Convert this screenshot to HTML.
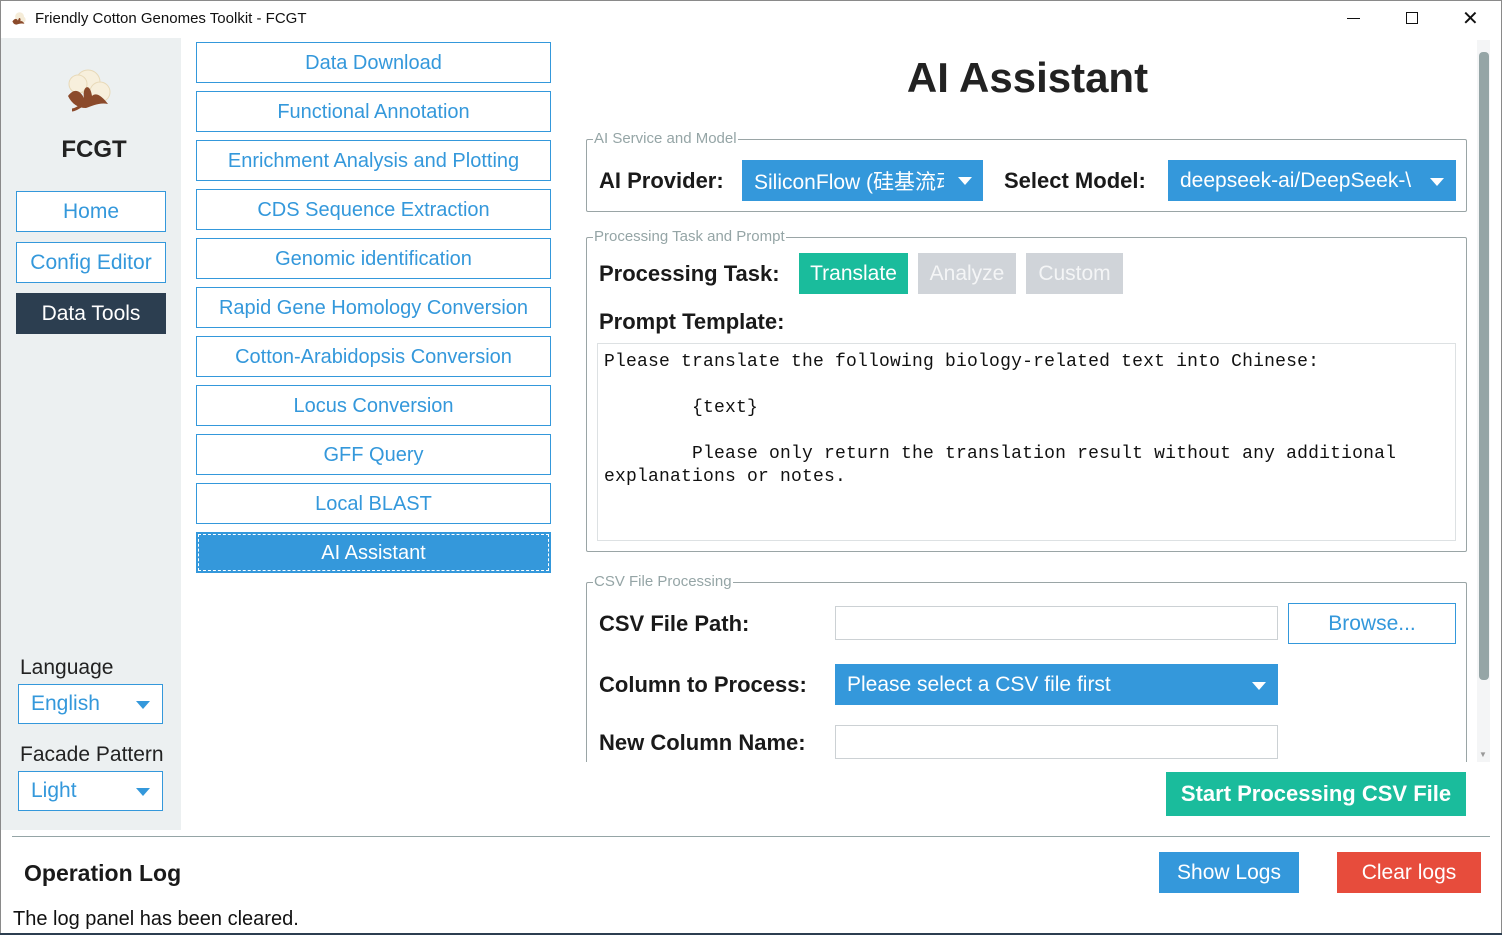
<!DOCTYPE html>
<html><head><meta charset="utf-8"><style>
*{box-sizing:border-box;margin:0;padding:0}
body{width:1502px;height:935px;position:relative;overflow:hidden;background:#fff;font-family:"Liberation Sans","Noto Sans CJK SC",sans-serif;color:#222}
.a{position:absolute}
.nav{position:absolute;left:196px;width:355px;height:41px;border:1.5px solid #3498db;color:#3498db;font-size:20px;display:flex;align-items:center;justify-content:center;background:#fff;padding-top:2px}
.sb{position:absolute;left:16px;width:150px;height:41px;border:1.5px solid #3498db;color:#3498db;font-size:21px;display:flex;align-items:center;justify-content:center;background:#fff}
.grp{position:absolute;border:1px solid #9aa5a6;border-radius:2px}
.leg{position:absolute;top:-10px;left:6px;background:#fff;font-size:15px;color:#95a5a6;padding:0 1px}
.lbl{position:absolute;font-size:22px;font-weight:bold;color:#1a1a1a}
.blue{position:absolute;background:#3498db;color:#fff;font-size:21px;display:flex;align-items:center;padding-left:12px}
.tri{position:absolute;right:12px;top:50%;margin-top:-3px;width:0;height:0;border-left:7px solid transparent;border-right:7px solid transparent;border-top:8px solid #fff}
.inp{position:absolute;border:1px solid #ccd1d4;background:#fff}
.btn{position:absolute;color:#fff;font-size:21px;display:flex;align-items:center;justify-content:center}
</style></head><body>
<div class="a" style="left:0;top:0;width:1502px;height:935px;border:1px solid #8a8a8a"></div>
<svg class="a" style="left:10px;top:11px" width="16" height="16" viewBox="0 0 40 40"><circle cx="24" cy="14" r="11" fill="#f5ecd8"/><circle cx="30" cy="22" r="9" fill="#f5ecd8"/><path d="M6 26 C12 18 16 18 20 24 C22 14 28 16 26 26 C30 24 34 28 36 32 C28 30 22 32 16 34 C10 34 8 30 6 26Z" fill="#8b4a2b"/></svg>
<div class="a" style="left:35px;top:10px;font-size:15px;color:#111">Friendly Cotton Genomes Toolkit - FCGT</div>
<div class="a" style="left:1347px;top:18px;width:13px;height:1px;background:#111"></div>
<div class="a" style="left:1406px;top:12px;width:12px;height:12px;border:1px solid #111"></div>
<div class="a" style="left:1462px;top:6px;font-size:20px;color:#111;font-weight:300">✕</div>
<div class="a" style="left:1px;top:38px;width:180px;height:792px;background:#ecf0f1"></div>
<svg class="a" style="left:64px;top:68px" width="50" height="44" viewBox="0 0 50 44"><circle cx="24" cy="14" r="12" fill="#f7efdc" stroke="#e8d9b8"/><circle cx="36" cy="24" r="10" fill="#f7efdc" stroke="#e8d9b8"/><circle cx="14" cy="16" r="9" fill="#f7efdc" stroke="#e8d9b8"/><path d="M4 28 C10 20 16 22 20 30 C18 18 26 14 28 28 C32 24 38 28 44 36 C36 34 28 38 22 40 C14 40 8 36 4 28Z" fill="#8b4a2b"/><path d="M20 36 C14 40 10 42 8 42" stroke="#8b4a2b" stroke-width="3" fill="none"/></svg>
<div class="a" style="left:0;width:188px;top:136px;text-align:center;font-size:24px;font-weight:bold;color:#222">FCGT</div>
<div class="sb" style="top:191px">Home</div>
<div class="sb" style="top:242px">Config Editor</div>
<div class="sb" style="top:293px;background:#2c3e50;border-color:#2c3e50;color:#fff">Data Tools</div>
<div class="a" style="left:20px;top:656px;font-size:21px">Language</div>
<div class="blue" style="left:18px;top:684px;width:145px;height:40px;background:#fff;border:1.5px solid #3498db;color:#3498db">English<div class="tri" style="border-top-color:#3498db"></div></div>
<div class="a" style="left:20px;top:743px;font-size:21px">Facade Pattern</div>
<div class="blue" style="left:18px;top:771px;width:145px;height:40px;background:#fff;border:1.5px solid #3498db;color:#3498db">Light<div class="tri" style="border-top-color:#3498db"></div></div>
<div class="nav" style="top:42px">Data Download</div>
<div class="nav" style="top:91px">Functional Annotation</div>
<div class="nav" style="top:140px">Enrichment Analysis and Plotting</div>
<div class="nav" style="top:189px">CDS Sequence Extraction</div>
<div class="nav" style="top:238px">Genomic identification</div>
<div class="nav" style="top:287px">Rapid Gene Homology Conversion</div>
<div class="nav" style="top:336px">Cotton-Arabidopsis Conversion</div>
<div class="nav" style="top:385px">Locus Conversion</div>
<div class="nav" style="top:434px">GFF Query</div>
<div class="nav" style="top:483px">Local BLAST</div>
<div class="nav" style="top:532px;background:#3498db;color:#fff;outline:1px dashed #fff;outline-offset:-3px">AI Assistant</div>
<div class="a" style="left:580px;width:895px;top:54px;text-align:center;font-size:42px;font-weight:bold;color:#222">AI Assistant</div>
<div class="grp" style="left:586px;top:139px;width:881px;height:73px"><div class="leg">AI Service and Model</div></div>
<div class="lbl" style="left:599px;top:168px">AI Provider:</div>
<div class="blue" style="left:742px;top:160px;width:241px;height:41px;overflow:hidden;white-space:nowrap">SiliconFlow (硅基流动</div>
<div class="a" style="left:944px;top:160px;width:39px;height:41px;background:#3498db"></div>
<div class="a" style="left:958px;top:177px;width:0;height:0;border-left:7px solid transparent;border-right:7px solid transparent;border-top:8px solid #fff"></div>
<div class="lbl" style="left:1004px;top:168px">Select Model:</div>
<div class="blue" style="left:1168px;top:160px;width:288px;height:41px">deepseek-ai/DeepSeek-\<div class="tri"></div></div>
<div class="grp" style="left:586px;top:237px;width:881px;height:315px"><div class="leg">Processing Task and Prompt</div></div>
<div class="lbl" style="left:599px;top:261px">Processing Task:</div>
<div class="btn" style="left:799px;top:253px;width:109px;height:41px;background:#1abc9c">Translate</div>
<div class="btn" style="left:918px;top:253px;width:98px;height:41px;background:#d0d4d9;color:#f4f5f6">Analyze</div>
<div class="btn" style="left:1026px;top:253px;width:97px;height:41px;background:#d0d4d9;color:#f4f5f6">Custom</div>
<div class="lbl" style="left:599px;top:309px">Prompt Template:</div>
<div class="inp" style="left:597px;top:343px;width:859px;height:198px;border-color:#dde1e3"></div>
<pre class="a" style="left:604px;top:351px;font-family:'Liberation Mono',monospace;font-size:18px;letter-spacing:0.2px;line-height:23px;color:#111">Please translate the following biology-related text into Chinese:

        {text}

        Please only return the translation result without any additional
explanations or notes.</pre>
<div class="grp" style="left:586px;top:582px;width:881px;height:200px;border-bottom:none"><div class="leg">CSV File Processing</div></div>
<div class="lbl" style="left:599px;top:611px">CSV File Path:</div>
<div class="inp" style="left:835px;top:606px;width:443px;height:34px"></div>
<div class="btn" style="left:1288px;top:603px;width:168px;height:41px;border:1.5px solid #3498db;color:#3498db;background:#fff">Browse...</div>
<div class="lbl" style="left:599px;top:672px">Column to Process:</div>
<div class="blue" style="left:835px;top:664px;width:443px;height:41px">Please select a CSV file first<div class="tri"></div></div>
<div class="lbl" style="left:599px;top:730px">New Column Name:</div>
<div class="inp" style="left:835px;top:725px;width:443px;height:34px"></div>
<div class="a" style="left:580px;top:762px;width:910px;height:70px;background:#fff"></div>
<div class="a" style="left:1477px;top:40px;width:13px;height:722px;background:#f4f5f6"></div>
<div class="a" style="left:1479px;top:52px;width:10px;height:628px;background:#95a5a6;border-radius:4px"></div>
<div class="a" style="left:1479px;top:750px;font-size:8px;color:#999">▼</div>
<div class="btn" style="left:1166px;top:772px;width:300px;height:44px;background:#1abc9c;font-weight:bold;font-size:22px">Start Processing CSV File</div>
<div class="a" style="left:12px;top:836px;width:1478px;height:1px;background:#95a5a6"></div>
<div class="a" style="left:24px;top:860px;font-size:23px;font-weight:bold;color:#1a1a1a">Operation Log</div>
<div class="btn" style="left:1159px;top:852px;width:140px;height:41px;background:#3498db">Show Logs</div>
<div class="btn" style="left:1337px;top:852px;width:144px;height:41px;background:#e74c3c">Clear logs</div>
<div class="a" style="left:13px;top:908px;font-size:20px;color:#111">The log panel has been cleared.</div>
<div class="a" style="left:0;top:933px;width:1502px;height:2px;background:#2c3e50"></div>
</body></html>
